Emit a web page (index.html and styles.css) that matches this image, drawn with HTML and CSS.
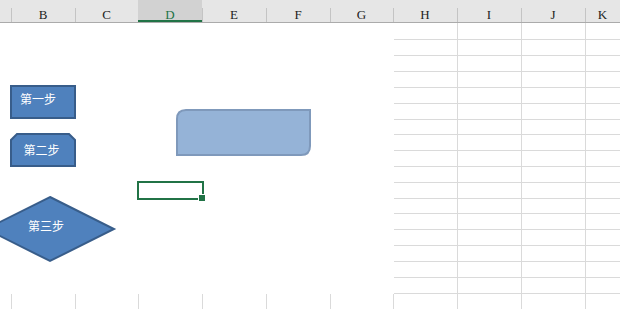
FILE: index.html
```html
<!DOCTYPE html>
<html>
<head>
<meta charset="utf-8">
<link rel="stylesheet" href="styles.css">
</head>
<body>
<div class="sheet">
  <div class="colhead">
    <div class="hc first"></div>
    <div class="hc">B</div>
    <div class="hc">C</div>
    <div class="hc sel">D</div>
    <div class="hc">E</div>
    <div class="hc">F</div>
    <div class="hc">G</div>
    <div class="hc">H</div>
    <div class="hc">I</div>
    <div class="hc">J</div>
    <div class="hc">K</div>
  </div>
  <div class="grid">
    <div class="row r17"><i></i><i></i><i></i><i></i><i></i><i></i><i></i><i></i><i></i><i></i><i></i></div>
    <div class="row"><i></i><i></i><i></i><i></i><i></i><i></i><i></i><i></i><i></i><i></i><i></i></div>
    <div class="row"><i></i><i></i><i></i><i></i><i></i><i></i><i></i><i></i><i></i><i></i><i></i></div>
    <div class="row"><i></i><i></i><i></i><i></i><i></i><i></i><i></i><i></i><i></i><i></i><i></i></div>
    <div class="row"><i></i><i></i><i></i><i></i><i></i><i></i><i></i><i></i><i></i><i></i><i></i></div>
    <div class="row"><i></i><i></i><i></i><i></i><i></i><i></i><i></i><i></i><i></i><i></i><i></i></div>
    <div class="row r15"><i></i><i></i><i></i><i></i><i></i><i></i><i></i><i></i><i></i><i></i><i></i></div>
    <div class="row"><i></i><i></i><i></i><i></i><i></i><i></i><i></i><i></i><i></i><i></i><i></i></div>
    <div class="row"><i></i><i></i><i></i><i></i><i></i><i></i><i></i><i></i><i></i><i></i><i></i></div>
    <div class="row"><i></i><i></i><i></i><i></i><i></i><i></i><i></i><i></i><i></i><i></i><i></i></div>
    <div class="row"><i></i><i></i><i></i><i></i><i></i><i></i><i></i><i></i><i></i><i></i><i></i></div>
    <div class="row r15"><i></i><i></i><i></i><i></i><i></i><i></i><i></i><i></i><i></i><i></i><i></i></div>
    <div class="row"><i></i><i></i><i></i><i></i><i></i><i></i><i></i><i></i><i></i><i></i><i></i></div>
    <div class="row"><i></i><i></i><i></i><i></i><i></i><i></i><i></i><i></i><i></i><i></i><i></i></div>
    <div class="row"><i></i><i></i><i></i><i></i><i></i><i></i><i></i><i></i><i></i><i></i><i></i></div>
    <div class="row"><i></i><i></i><i></i><i></i><i></i><i></i><i></i><i></i><i></i><i></i><i></i></div>
    <div class="row"><i></i><i></i><i></i><i></i><i></i><i></i><i></i><i></i><i></i><i></i><i></i></div>
    <div class="row last"><i></i><i></i><i></i><i></i><i></i><i></i><i></i><i></i><i></i><i></i><i></i></div>
  </div>

  <div class="canvas">
    <svg class="shapes" width="394" height="271" viewBox="0 23 394 271">
      <rect x="11" y="86" width="64" height="32" fill="#4f81bd" stroke="#385d8a" stroke-width="2"/>
      <text x="38" y="98" class="lbl">第一步</text>

      <path d="M17 134 L69 134 L75 140 L75 166 L11 166 L11 140 Z" fill="#4f81bd" stroke="#385d8a" stroke-width="2"/>
      <text x="41.5" y="149" class="lbl">第二步</text>

      <path d="M50 197 L114 229 L50 261 L-14 229 Z" fill="#4f81bd" stroke="#385d8a" stroke-width="2" stroke-linejoin="miter"/>
      <text x="46" y="225" class="lbl">第三步</text>

      <path d="M186 110 L310 110 L310 146 Q310 155 301 155 L177 155 L177 119 Q177 110 186 110 Z" fill="#95b3d7" stroke="#7f99bb" stroke-width="2"/>
    </svg>
    <div class="cellsel"></div>
    <div class="handle"></div>
  </div>
</div>
</body>
</html>
```

FILE: styles.css
```css
* { box-sizing: border-box; }
html, body { margin: 0; padding: 0; background: #ffffff; overflow: hidden; }
body { width: 620px; height: 309px; }

.sheet {
  position: relative;
  width: 620px;
  height: 309px;
  overflow: hidden;
}

.colhead {
  display: grid;
  grid-template-columns: 11px 64px 63px 64px 64px 64px 63px 64px 64px 64px 1fr;
  height: 23px;
  background: #e6e6e6;
  border-bottom: 1px solid #ababab;
}

.hc {
  font-family: "Liberation Serif", "DejaVu Serif", serif;
  font-size: 13px;
  line-height: 14px;
  padding-top: 8px;
  text-align: center;
  color: #222222;
  background: linear-gradient(#c4c4c4, #c4c4c4) left 8px / 1px 14px no-repeat, #e6e6e6;
}
.hc.first { background: #e6e6e6; }
.hc.sel {
  background: #d2d2d2;
  color: #217346;
  border-bottom: 2px solid #217346;
  height: 22px;
}

.grid { display: flex; flex-direction: column; }

.row {
  display: grid;
  grid-template-columns: 11px 64px 63px 64px 64px 64px 63px 64px 64px 64px 1fr;
  height: 16px;
}
.row.r17 { height: 17px; }
.row.r15 { height: 15px; }
.row.last { height: 20px; }

.row > i {
  display: block;
  border-left: 1px solid #dadada;
  border-bottom: 1px solid #dadada;
}
.row > i:first-child { border-left: none; }

.canvas {
  position: absolute;
  left: 0;
  top: 23px;
  width: 394px;
  height: 271px;
  background: #ffffff;
}

.shapes { display: block; }

.lbl {
  font-family: "Noto Sans CJK SC", "Noto Sans", sans-serif;
  font-size: 12px;
  fill: #ffffff;
  text-anchor: middle;
  dominant-baseline: central;
}

.cellsel {
  position: absolute;
  left: 137px;
  top: 158px;
  width: 67px;
  height: 19px;
  border: 2px solid #217346;
}

.handle {
  position: absolute;
  left: 199px;
  top: 172px;
  width: 6px;
  height: 6px;
  background: #217346;
  border: 1px solid #ffffff;
  box-sizing: content-box;
  margin: -1px 0 0 -1px;
}
```
